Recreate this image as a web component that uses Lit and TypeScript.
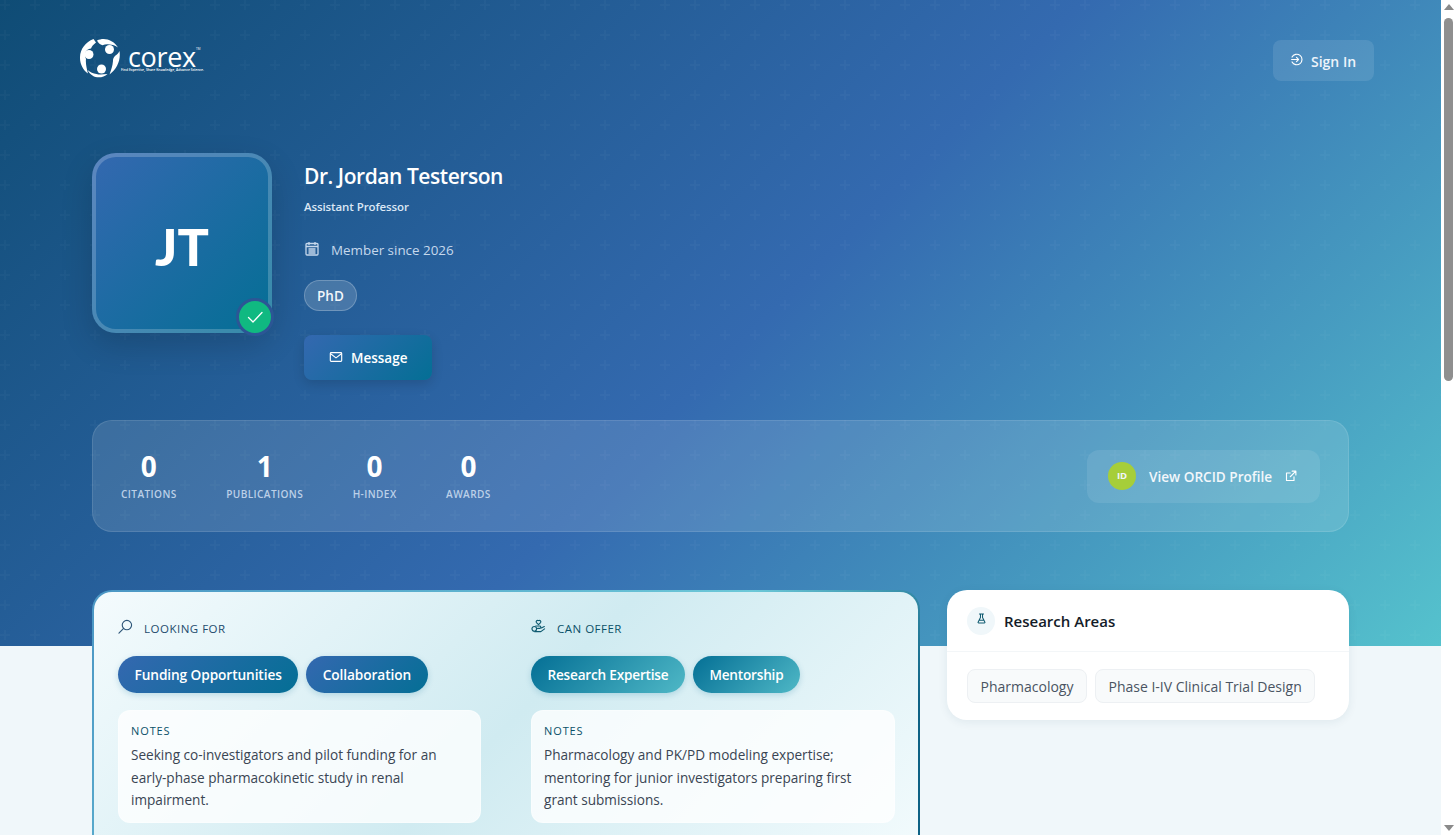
import { LitElement, html, css } from "lit";
import { customElement } from "lit/decorators.js";

const plus = "data:image/svg+xml,%3Csvg width='60' height='60' xmlns='http://www.w3.org/2000/svg'%3E%3Cpath fill='%23fff' fill-opacity='.022' d='M36 34v-4h-2v4h-4v2h4v4h2v-4h4v-2h-4zm0-30V0h-2v4h-4v2h4v4h2V6h4V4h-4zM6 34v-4H4v4H0v2h4v4h2v-4h4v-2H6zM6 4V0H4v4H0v2h4v4h2V6h4V4H6z'/%3E%3C/svg%3E";

@customElement("app-root")
export class AppRoot extends LitElement {
  static styles = css`
    :host { display: flex; height: 835px; overflow: hidden; background: #f0f7fa; font-family: "Open Sans", "Noto Sans", sans-serif; color: #1a2433; }
    .page { flex: 1; min-width: 0; position: relative; overflow: hidden; }
    .hero { height: 646px; background: linear-gradient(135deg, #0f4c75 0%, #346ab0 52%, #55c2cd 100%); position: relative; }
    .pattern { position: absolute; inset: 0; }
    .content { position: absolute; inset: 0; }
    header { display: flex; justify-content: space-between; align-items: flex-start; padding: 38px 67px 0 80px; height: 153px; box-sizing: border-box; }
    .logo { display: flex; height: 40px; }
    .logo svg { width: 40px; height: 40px; }
    .wordmark { position: relative; width: 84px; margin-left: 1px; color: #fff; }
    .wordmark b { position: absolute; left: 7px; top: 9px; font: 400 27px/20px "Open Sans", sans-serif; letter-spacing: -.35px; }
    .wordmark i { position: absolute; left: 0; top: 29px; font: 600 3.4px/5px "Open Sans", sans-serif; white-space: nowrap; }
    .wordmark u { position: absolute; left: 75px; top: 9px; font: 400 3px/4px "Open Sans", sans-serif; text-decoration: none; }
    .signin { display: flex; align-items: center; gap: 8px; width: 101px; height: 41px; margin-top: 2px; box-sizing: border-box; padding: 2px 0 0 17px; border-radius: 8px; background: rgba(255,255,255,.1); color: #eef4fb; font-size: 14px; font-weight: 600; }
    .signin svg { width: 13px; height: 13px; margin-top: -5px; }
    .wrap { margin: 0 92px; }
    .profile { display: flex; gap: 32px; height: 267px; }
    .avatar { position: relative; width: 180px; height: 180px; box-sizing: border-box; padding-top: 6px; border: 4px solid rgba(255,255,255,.2); border-radius: 24px; background: linear-gradient(135deg, #3468b0, #046f95); background-origin: border-box; box-shadow: 0 12px 32px rgba(0,0,0,.16); display: flex; align-items: center; justify-content: center; color: #fff; font-family: Lato, "Open Sans", sans-serif; font-size: 52px; font-weight: 900; line-height: 1; }
    .badge { position: absolute; right: -3px; bottom: -4px; width: 32px; height: 32px; border-radius: 50%; background: #10b981; border: 3px solid #2c5695; display: flex; align-items: center; justify-content: center; box-sizing: content-box; margin: -3px; }
    .badge svg { width: 18px; height: 18px; }
    .info { color: #fff; }
    h1 { margin: 8px 0 0; font-size: 21px; line-height: 30px; font-weight: 600; letter-spacing: -.45px; }
    .role { margin-top: 7px; font-size: 11.5px; line-height: 17px; font-weight: 600; letter-spacing: -.1px; color: #dbe7f5; }
    .since { display: flex; align-items: center; gap: 11px; margin-top: 25px; height: 20px; font-size: 13.4px; color: #c6d8ec; }
    .since svg { width: 16px; height: 16px; margin-top: -3px; }
    .deg { display: inline-flex; align-items: center; height: 31px; box-sizing: border-box; padding: 0 12px; margin-top: 20px; border-radius: 16px; border: 1px solid rgba(255,255,255,.22); background: rgba(255,255,255,.16); font-size: 13.5px; font-weight: 600; color: #f2f6fb; }
    .msg { display: flex; align-items: center; gap: 8px; width: 128px; height: 45px; box-sizing: border-box; padding-left: 25px; margin-top: 24px; border-radius: 8px; background: linear-gradient(135deg, #3468b0, #046f95); box-shadow: 0 4px 12px rgba(0,0,0,.14); font-size: 13.5px; font-weight: 600; color: #fff; }
    .msg svg { width: 14px; height: 14px; margin-top: -2px; }
    .stats { display: flex; justify-content: space-between; align-items: center; height: 112px; box-sizing: border-box; padding: 0 28px; border: 1px solid rgba(255,255,255,.11); border-radius: 20px; background: rgba(255,255,255,.12); }
    .nums { display: flex; gap: 49.500px; margin-top: -2px; }
    .stat { text-align: center; color: #fff; }
    .stat strong { display: block; font-size: 28px; line-height: 32px; font-weight: 700; }
    .stat span { display: block; margin-top: 5px; font-size: 10.1px; line-height: 14px; font-weight: 600; letter-spacing: .4px; color: #bcd0e8; }
    .orcid { display: flex; align-items: center; width: 233px; height: 53px; box-sizing: border-box; padding-left: 21px; border-radius: 12px; background: rgba(255,255,255,.09); color: #f2f7fb; font-size: 13.6px; font-weight: 600; }
    .idc { width: 28px; height: 28px; border-radius: 50%; background: #a6ce39; display: flex; align-items: center; justify-content: center; font-size: 9.500px; font-weight: 700; margin-right: 13px; padding-bottom: 2px; box-sizing: border-box; }
    .orcid svg { width: 12px; height: 12px; margin-left: 13px; }
    .grid { display: flex; gap: 27px; margin-top: 58px; align-items: flex-start; }
    .main { width: 828px; flex: none; box-sizing: border-box; padding: 24px 23px 40px 24px; border: 2px solid transparent; border-radius: 20px; background: linear-gradient(135deg, #f4fbfd 0%, #d0ebf1 50%, #f3fbfd 100%) padding-box, linear-gradient(135deg, #4b96c4, #6cc8d8 60%, #0e6285 85%) border-box; display: flex; gap: 50px; }
    .col { width: 363px; flex: none; }
    .col.offer { flex: 1; width: auto; min-width: 0; }
    .label { display: flex; align-items: center; gap: 11px; height: 24px; font-size: 11.5px; letter-spacing: .5px; font-weight: 500; color: #234b6d; }
    .offer .label { color: #0a5168; }
    .label svg { width: 15px; height: 15px; margin-top: -4px; }
    .chips { display: flex; gap: 8px; margin-top: 16px; }
    .chip { display: flex; align-items: center; height: 37px; padding: 0 16.5px; border-radius: 19px; color: #fff; font-size: 13.7px; font-weight: 600; letter-spacing: -.1px; background: linear-gradient(135deg, #3468b0, #046f95); box-shadow: 0 2px 6px rgba(4,111,149,.2); }
    .offer .chip { background: linear-gradient(135deg, #046f95, #4fb8c6); font-size: 13.6px; letter-spacing: -.2px; }
    .notes { box-sizing: border-box; height: 113px; margin-top: 17px; padding: 13px 12px; border-radius: 12px; border: 1px solid rgba(255,255,255,.35); background: rgba(255,255,255,.78); }
    .notes h4 { margin: 0; font-size: 11px; line-height: 14px; letter-spacing: .9px; font-weight: 500; color: #0a5168; }
    .notes p { margin: 6px 0 0; font-size: 13.6px; line-height: 22.5px; color: #3a4553; }
    .side { width: 402px; flex: none; height: 130px; box-sizing: border-box; border-radius: 20px; background: #fff; box-shadow: 0 2px 10px rgba(20,60,90,.08); }
    .side-h { display: flex; align-items: center; gap: 9px; height: 62px; box-sizing: border-box; padding: 0 20px; border-bottom: 1px solid #f3f6f8; font-size: 15px; font-weight: 600; color: #141c28; }
    .ic { width: 28px; height: 28px; border-radius: 50%; background: #f0f7fa; display: flex; align-items: center; justify-content: center; }
    .ic svg { width: 11px; height: 11px; margin-top: -4px; }
    .tags { display: flex; gap: 8px; padding: 17px 20px; }
    .tag { display: flex; align-items: center; height: 34px; box-sizing: border-box; padding: 0 12.5px; border: 1px solid #edf0f3; border-radius: 8px; background: #f8fafb; font-size: 14px; font-weight: 500; color: #4a5462; }
    .bar { width: 15px; flex: none; background: #fff; display: flex; flex-direction: column; align-items: center; }
    .up { margin-top: 4px; width: 0; height: 0; border: 5px solid transparent; border-top: 0; border-bottom: 6px solid #8a8a8a; }
    .thumb { width: 9px; height: 363px; margin-top: 8px; border-radius: 5px; background: #8f8f8f; }
    .down { margin-top: auto; margin-bottom: 4px; width: 0; height: 0; border: 5px solid transparent; border-bottom: 0; border-top: 6px solid #8a8a8a; }
  `;

  private logo() {
    return html`<svg viewBox="0 0 40 40" fill="#fff">
      <path d="M13.500 1 C5.500 4 .3 11 0 19 C-.2 26 3 32 8 35.500 C6.500 30 5.500 25 6 21 C3.500 16 6 11 11 10.500 C12 8 13.500 6.500 16 4.500 Z"/>
      <circle cx="9" cy="16.500" r="4.500"/>
      <path d="M17 2.500 C24 -1 33 1.500 38 9.500 C35 7.500 33.500 7 31.500 6.800 C28 5.800 25 6.200 22.500 7.200 C20 6.500 18 4.800 17 2.500 Z"/>
      <circle cx="29.500" cy="11.500" r="4.500"/>
      <path d="M39.500 13 C41 22 37 31 29.500 36.500 C31.500 31 32.500 28 33 23 C32.800 20.500 34 19 35.500 17.500 C37 16.500 38.500 15 39.500 13 Z"/>
      <circle cx="21.500" cy="31" r="4.500"/>
      <path d="M7.500 32 C10.500 34.500 13 35.500 16.500 36 C19 36.800 23 36.500 27.500 36 C22 41 12 41 7.500 32 Z"/>
    </svg>`;
  }

  render() {
    return html`
      <div class="page">
        <div class="hero"><div class="pattern" style="background-image:url(&quot;${plus}&quot;)"></div></div>
        <div class="content">
          <header>
            <div class="logo">${this.logo()}
              <div class="wordmark"><b>corex</b><u>TM</u><i>Find Expertise, Share Knowledge, Advance Science.</i></div>
            </div>
            <div class="signin">
              <svg viewBox="0 0 16 16" fill="none" stroke="#fff" stroke-width="1.400" stroke-linecap="round" stroke-linejoin="round"><path d="M2.500 5A6.500 6.500 0 1 1 2.500 11"/><path d="M2 8H10.500M8 5.500 10.500 8 8 10.500"/></svg>
              Sign In
            </div>
          </header>
          <div class="wrap">
            <section class="profile">
              <div class="avatar">JT
                <div class="badge"><svg viewBox="0 0 18 18" fill="none" stroke="#fff" stroke-width="1.300" stroke-linecap="round" stroke-linejoin="round"><path d="M2.500 9.500 7 14 16 4.500"/></svg></div>
              </div>
              <div class="info">
                <h1>Dr. Jordan Testerson</h1>
                <div class="role">Assistant Professor</div>
                <div class="since">
                  <svg viewBox="0 0 16 16" fill="none" stroke="#c6d8ec" stroke-width="1.300"><rect x="2" y="2.500" width="12" height="11.500" rx="1"/><path d="M2 5.500h12M5 1v3M11 1v3M4.500 8h7M4.500 10h7M4.500 12h7"/></svg>
                  Member since 2026
                </div>
                <div class="deg">PhD</div>
                <div class="msg">
                  <svg viewBox="0 0 16 16" fill="none" stroke="#fff" stroke-width="1.300" stroke-linejoin="round"><rect x="1.500" y="3" width="13" height="10" rx="1"/><path d="M1.500 4 8 9l6.500-5"/></svg>
                  Message
                </div>
              </div>
            </section>
            <section class="stats">
              <div class="nums">
                <div class="stat"><strong>0</strong><span>CITATIONS</span></div>
                <div class="stat"><strong>1</strong><span>PUBLICATIONS</span></div>
                <div class="stat"><strong>0</strong><span>H-INDEX</span></div>
                <div class="stat"><strong>0</strong><span>AWARDS</span></div>
              </div>
              <div class="orcid">
                <div class="idc">ID</div>
                View ORCID Profile
                <svg viewBox="0 0 16 16" fill="none" stroke="#fff" stroke-width="1.500" stroke-linecap="round" stroke-linejoin="round"><path d="M12 9v5H2V4H7"/><path d="M9.500 1.500h5v5M14.500 1.500 7 9"/></svg>
              </div>
            </section>
            <section class="grid">
              <div class="main">
                <div class="col">
                  <div class="label">
                    <svg viewBox="0 0 16 16" fill="none" stroke="#2d5578" stroke-width="1.200" stroke-linecap="round"><circle cx="9.500" cy="6.500" r="5"/><path d="M6 10 1 15"/></svg>
                    LOOKING FOR
                  </div>
                  <div class="chips"><div class="chip">Funding Opportunities</div><div class="chip">Collaboration</div></div>
                  <div class="notes"><h4>NOTES</h4><p>Seeking co-investigators and pilot funding for an early-phase pharmacokinetic study in renal impairment.</p></div>
                </div>
                <div class="col offer">
                  <div class="label">
                    <svg viewBox="0 0 16 16" fill="none" stroke="#0e5a70" stroke-width="1.200" stroke-linecap="round" stroke-linejoin="round"><path d="M8 6 5.800 3.800a1.500 1.500 0 0 1 2.200-2 1.500 1.500 0 0 1 2.200 2Z"/><path d="M5 7.500h4.500a1.300 1.300 0 0 1 0 2.500H7M11 9.500l3.200-1.500"/><circle cx="3.500" cy="10.500" r="2.500"/><path d="M4 13.500h6.500l4-3"/></svg>
                    CAN OFFER
                  </div>
                  <div class="chips"><div class="chip">Research Expertise</div><div class="chip">Mentorship</div></div>
                  <div class="notes"><h4>NOTES</h4><p>Pharmacology and PK/PD modeling expertise; mentoring for junior investigators preparing first grant submissions.</p></div>
                </div>
              </div>
              <aside class="side">
                <div class="side-h">
                  <div class="ic"><svg viewBox="0 0 16 16" fill="none" stroke="#0e5a70" stroke-width="1.500" stroke-linejoin="round" stroke-linecap="round"><path d="M5 1.500h6M6.500 1.500v5L3 13.500a.8.8 0 0 0 .8 1h8.400a.8.8 0 0 0 .8-1L9.500 6.500v-5M4.500 10.500h7"/></svg></div>
                  Research Areas
                </div>
                <div class="tags"><div class="tag">Pharmacology</div><div class="tag">Phase I-IV Clinical Trial Design</div></div>
              </aside>
            </section>
          </div>
        </div>
      </div>
      <div class="bar"><div class="up"></div><div class="thumb"></div><div class="down"></div></div>
    `;
  }
}
